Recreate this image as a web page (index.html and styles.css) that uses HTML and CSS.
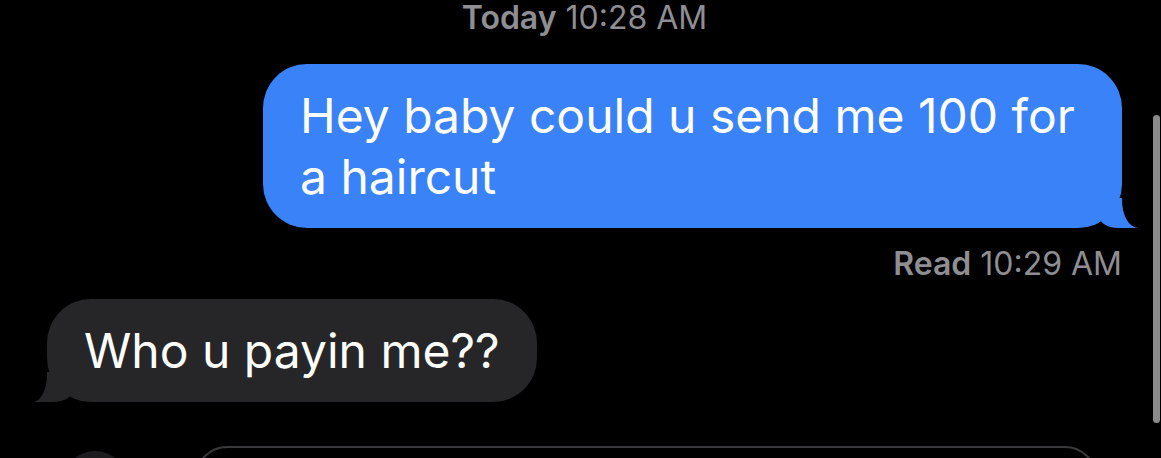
FILE: index.html
```html
<!DOCTYPE html>
<html lang="en">
<head>
    <meta charset="UTF-8">
    <meta name="viewport" content="width=device-width, initial-scale=1.0">
    <title>Messages</title>
    <link rel="stylesheet" href="styles.css">
</head>
<body>
    <div class="thread">
        <p class="stamp"><b>Today</b> 10:28 AM</p>

        <div class="row sent">
            <div class="bubble sent">Hey baby could u send me 100 for a haircut</div>
        </div>
        <p class="receipt"><b>Read</b> 10:29 AM</p>

        <div class="row recv">
            <div class="bubble recv">Who u payin me??</div>
        </div>

        <div class="composer">
            <span class="apps"></span>
            <div class="field"></div>
        </div>
    </div>

    <div class="scrollbar"></div>
</body>
</html>
```

FILE: styles.css
```css
/* dark iMessage thread */
body {
    margin: 0;
    height: 100vh;
    overflow: hidden;
    background-color: #000;
    font-family: 'Inter', 'Liberation Sans', sans-serif;
    color: #fff;
}
.thread {
    display: flex;
    flex-direction: column;
    padding: 0 39px 0 47px;
}
.stamp, .receipt {
    margin: 0;
    font-size: 32px;
    line-height: 36px;
    color: #8e8e93;
}
.stamp b, .receipt b {
    font-weight: 600;
}
.stamp {
    text-align: center;
}
.receipt {
    text-align: right;
    margin-top: 18px;
}
.row {
    display: flex;
}
.row.sent {
    justify-content: flex-end;
    margin-top: 28px;
}
.row.recv {
    justify-content: flex-start;
    margin-top: 17px;
}
.bubble {
    position: relative;
    box-sizing: border-box;
    padding: 21px 37px;
    border-radius: 44px;
    font-size: 48px;
    line-height: 61px;
}
.bubble.sent {
    max-width: 859px;
    padding-right: 30px;
    background-color: #3a82f7;
}
.bubble.recv {
    background-color: #262628;
}

/* tails */
.bubble::before, .bubble::after {
    content: "";
    position: absolute;
    bottom: 0;
    height: 30px;
}
.bubble.sent::before {
    right: -16px;
    width: 40px;
    background-color: #3a82f7;
    border-bottom-left-radius: 20px 14px;
}
.bubble.sent::after {
    right: -40px;
    width: 40px;
    background-color: #000;
    border-bottom-left-radius: 16px 28px;
}
.bubble.recv::before {
    left: -14px;
    width: 40px;
    background-color: #262628;
    border-bottom-right-radius: 20px 12px;
}
.bubble.recv::after {
    left: -40px;
    width: 40px;
    background-color: #000;
    border-bottom-right-radius: 14px 28px;
}

.composer {
    display: flex;
    align-items: flex-start;
    gap: 68px;
    margin-top: 44px;
    padding: 0 25px 0 16px;
}
.apps {
    width: 64px;
    height: 64px;
    margin-top: 5px;
    border-radius: 50%;
    background-color: #1c1c1e;
}
.field {
    flex: 1;
    height: 64px;
    border: 2px solid #39393b;
    border-radius: 32px;
}
.scrollbar {
    position: absolute;
    top: 115px;
    right: 1px;
    width: 7px;
    height: 308px;
    border-radius: 4px;
    background-color: #8a8a8a;
}
```
